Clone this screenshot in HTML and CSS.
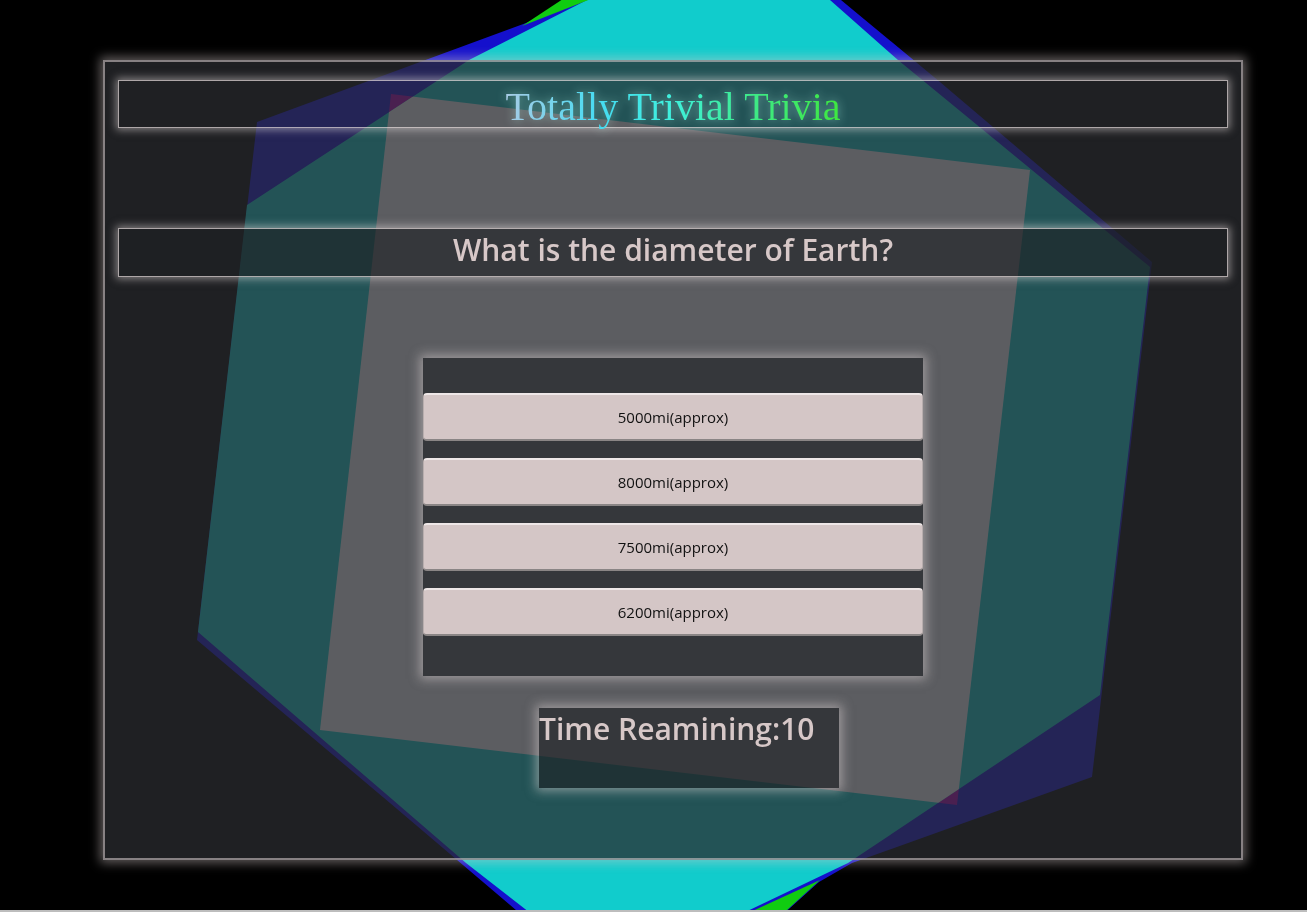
FILE: index.html
```html
<!DOCTYPE html>
<html lang="en">
<head>
  <meta charset="UTF-8">
  <meta name="viewport" content="width=device-width, initial-scale=1.0">
  <title>Totally Trivial Trivia</title>
  <link rel="stylesheet" href="styles.css">
</head>
<body>
  <svg class="backdrop" width="1307" height="912" viewBox="0 0 1307 912" aria-hidden="true">
    <defs>
      <clipPath id="cyanClip">
        <polygon points="247,205 469,60 587,0 600,-30 800,-30 830,0 898,60 1150,267 1100,695 848,863 737,916 720,935 550,935 534,916 466,863 198,632"/>
      </clipPath>
    </defs>
    <polygon class="sq-blue" points="257,122 526,23 590,-5 600,-30 815,-30 841,0 940,82 1152,262 1092,777 852,863 819,882 760,935 540,935 523,916 410,820 197,640"/>
    <polygon class="sq-magenta" points="391,94 1030,170 957,805 320,730"/>
    <polygon class="sq-cyan" points="247,205 469,60 587,0 600,-30 800,-30 830,0 898,60 1150,267 1100,695 848,863 737,916 720,935 550,935 534,916 466,863 198,632"/>
    <polygon class="sq-white" clip-path="url(#cyanClip)" points="391,94 1030,170 957,805 320,730"/>
    <polygon class="sq-green" points="522,26 566,-3 596,-3"/>
    <polygon class="sq-green" points="733,920 820,880 776,920"/>
  </svg>

  <main class="board">
    <header class="title-bar">
      <h1 class="title"><span class="title-text">Totally Trivial Trivia</span></h1>
    </header>

    <div class="question-bar">
      <h2 class="question">What is the diameter of Earth?</h2>
    </div>

    <div class="answers">
      <button class="answer" type="button">5000mi(approx)</button>
      <button class="answer" type="button">8000mi(approx)</button>
      <button class="answer" type="button">7500mi(approx)</button>
      <button class="answer" type="button">6200mi(approx)</button>
    </div>

    <div class="timer">
      <h2 class="timer-text">Time Reamining:10</h2>
    </div>
  </main>
</body>
</html>
```

FILE: styles.css
```css
html { background: #000; }
body { margin: 0; padding-top: 60px; height: 912px; box-sizing: border-box; border-bottom: 2px solid #bdbdbd; font-family: "Open Sans", "Noto Sans", Arial, sans-serif; }

.backdrop { position: fixed; top: 0; left: 0; z-index: -1; }
.sq-blue { fill: #1410cc; }
.sq-magenta { fill: #ac00b4; }
.sq-cyan { fill: #11cccc; }
.sq-white { fill: #f4f4f8; }
.sq-green { fill: #10cc10; }

.board { box-sizing: border-box; width: 1140px; height: 800px; margin: 0 0 0 103px; padding: 18px 13px; background: rgba(41, 43, 47, 0.75); border: 2px solid rgba(205, 195, 195, 0.6); box-shadow: 0 0 10px 3px rgba(215, 205, 205, 0.45); }

.title-bar { box-sizing: border-box; height: 48px; border: 1px solid rgba(235, 225, 225, 0.7); box-shadow: 0 0 8px 2px rgba(235, 225, 225, 0.5); text-align: center; }
.title { margin: 0; padding-top: 3px; font-family: "Liberation Serif", "Times New Roman", serif; font-weight: normal; font-size: 40px; line-height: 46px; }
.title-text { display: inline-block; background: linear-gradient(90deg, #a9cbe6 0%, #46dcf2 28%, #3ff0dc 50%, #3eea8c 72%, #3ee83e 100%); -webkit-background-clip: text; background-clip: text; color: transparent; filter: drop-shadow(0 0 5px rgba(190, 255, 240, 0.55)); }

.question-bar { box-sizing: border-box; height: 49px; margin-top: 100px; background: rgba(31, 32, 35, 0.62); border: 1px solid rgba(235, 225, 225, 0.7); box-shadow: 0 0 8px 2px rgba(235, 225, 225, 0.5); text-align: center; }
.question { margin: 0; font-size: 30px; font-weight: 600; line-height: 42px; color: #d7c8c8; }

.answers { box-sizing: border-box; width: 500px; height: 318px; margin: 81px auto 0; padding: 35px 0 40px; display: flex; flex-direction: column; gap: 17px; background: rgba(31, 32, 35, 0.62); box-shadow: 0 0 10px 3px rgba(225, 215, 215, 0.5); }
.answer { height: 48px; width: 100%; padding: 0; font-family: "Open Sans", "Noto Sans", Arial, sans-serif; font-size: 15px; color: #111; background: #d4c6c6; border-radius: 4px; border: 1px solid #b8aeae; border-top: 2px solid #eee7e7; border-bottom: 2px solid #8a8585; cursor: pointer; }

.timer { box-sizing: border-box; width: 300px; height: 80px; margin: 32px 0 0 421px; background: rgba(31, 32, 35, 0.62); box-shadow: 0 0 10px 3px rgba(225, 215, 215, 0.5); }
.timer-text { margin: 0; font-size: 30px; font-weight: 600; line-height: 41px; color: #d7c8c8; }
```
